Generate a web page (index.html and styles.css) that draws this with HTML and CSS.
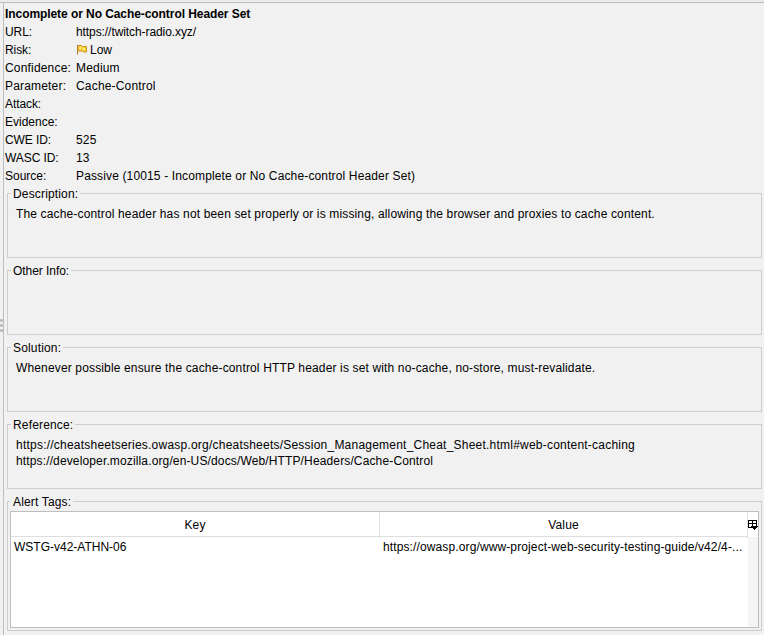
FILE: index.html
```html
<!DOCTYPE html>
<html lang="en"><head><meta charset="utf-8"><title>Alert</title><link rel="stylesheet" href="styles.css"></head>
<body>
<div class="grip"><i></i><i></i><i></i></div>
<main class="panel">
<h1>Incomplete or No Cache-control Header Set</h1>
<dl class="facts">
<dt class="tight">URL:</dt><dd class="tight">https://twitch-radio.xyz/</dd>
<dt class="tight">Risk:</dt><dd class="risk"><svg class="flag" width="12" height="12" viewBox="0 0 12 12"><path d="M1.500 1v9.500" stroke="#a87432"/><path d="M2 1.500h3.500l1 1H10.500V8H7.500l-1-1H2z" fill="#f8cf3a" stroke="#cf9420"/><path d="M3 3h2v2H3zM7 4h2v2H7z" fill="#ffe98a"/></svg>Low</dd>
<dt class="wide">Confidence:</dt><dd class="wide">Medium</dd>
<dt class="wide">Parameter:</dt><dd class="wide">Cache-Control</dd>
<dt class="tight">Attack:</dt><dd></dd>
<dt>Evidence:</dt><dd></dd>
<dt class="tight">CWE ID:</dt><dd class="wide">525</dd>
<dt class="tight">WASC ID:</dt><dd class="wide">13</dd>
<dt>Source:</dt><dd class="body">Passive (10015 - Incomplete or No Cache-control Header Set)</dd>
</dl>
<fieldset><legend>Description:</legend><p>The cache-control header has not been set properly or is missing, allowing the browser and proxies to cache content.</p></fieldset>
<fieldset><legend class="tight">Other Info:</legend></fieldset>
<fieldset><legend>Solution:</legend><p>Whenever possible ensure the cache-control HTTP header is set with no-cache, no-store, must-revalidate.</p></fieldset>
<fieldset><legend>Reference:</legend><p class="link">https://cheatsheetseries.owasp.org/cheatsheets/Session_Management_Cheat_Sheet.html#web-content-caching</p><p class="link2">https://developer.mozilla.org/en-US/docs/Web/HTTP/Headers/Cache-Control</p></fieldset>
<fieldset class="tags"><legend>Alert Tags:</legend>
<div class="table">
<div class="head"><span>Key</span><span>Value</span></div>
<div class="corner"><svg width="10" height="10" viewBox="0 0 10 10" shape-rendering="crispEdges"><path d="M0 .5h9M.5 0v8M0 3.500h9M4.500 0v6M8.500 0v6M0 7.500h4" fill="none" stroke="#000"/><path d="M3 6h7v1H9v1H8v1H7v1H6V9H5V8H4V7H3z" fill="#000"/></svg></div>
<div class="row"><span>WSTG-v42-ATHN-06</span><span class="url">https://owasp.org/www-project-web-security-testing-guide/v42/4-...</span></div>
<div class="track"></div>
</div>
</fieldset>
</main>
</body></html>
```
FILE: styles.css
```css
body{margin:0;display:flex;box-sizing:border-box;height:635px;background:#f1f1f1;border-top:2px solid #ebebeb;font:12px/18px "Liberation Sans",Arial,sans-serif;color:#000;overflow:hidden}
.grip{width:3px;border-top:1px solid #bebebe;display:flex;flex-direction:column;justify-content:center;gap:2px;padding-top:12px;box-sizing:border-box}
.grip i{width:3px;height:3px;background:#bdbdbd;border-radius:1px}
.panel{flex:1;min-width:0;border-left:1px solid #bebebe;border-top:1px solid #bebebe;padding:2px 2px 0 1px}
h1{margin:0;font-size:12px;line-height:18px;letter-spacing:-.07px}
.facts{margin:0 0 1px;display:grid;grid-template-columns:71px 1fr;grid-auto-rows:18px}
dd{margin:0}
.tight{letter-spacing:-.08px}
.wide{letter-spacing:.18px}
.body{letter-spacing:.14px}
.risk{display:flex;align-items:center}
.flag{margin:-1px 2px 0 0}
fieldset{margin:0 0 5px 2px;min-width:0;height:72px;box-sizing:border-box;border:1px solid #cdcdcd;padding:5px 3px 0}
legend{padding:0 2px;line-height:17px;height:15px;letter-spacing:.16px}
legend.tight{letter-spacing:-.05px}
p{margin:0 0 0 5px;line-height:16px;letter-spacing:.148px;white-space:nowrap}
.link{letter-spacing:.222px}
.link2{letter-spacing:.137px}
.tags{height:137px;padding:2px 2px 0 2px}
.tags legend{padding-left:3px}
.table{box-sizing:border-box;height:117px;border:1px solid #bebebe;background:#fff;display:grid;grid-template-columns:1fr 10px;grid-template-rows:25px 1fr}
.head,.row{display:grid;grid-template-columns:369px 1fr}
.head{text-align:center;line-height:26px;border-bottom:1px solid #dedede;height:24px;letter-spacing:.18px}
.head span{border-right:1px solid #dedede}
.row{line-height:20px;align-content:start;white-space:nowrap}
.row span{padding-left:3px}
.row .url{letter-spacing:.12px}
.corner{display:flex;align-items:center}
.track{background:#f4f4f4}
```
